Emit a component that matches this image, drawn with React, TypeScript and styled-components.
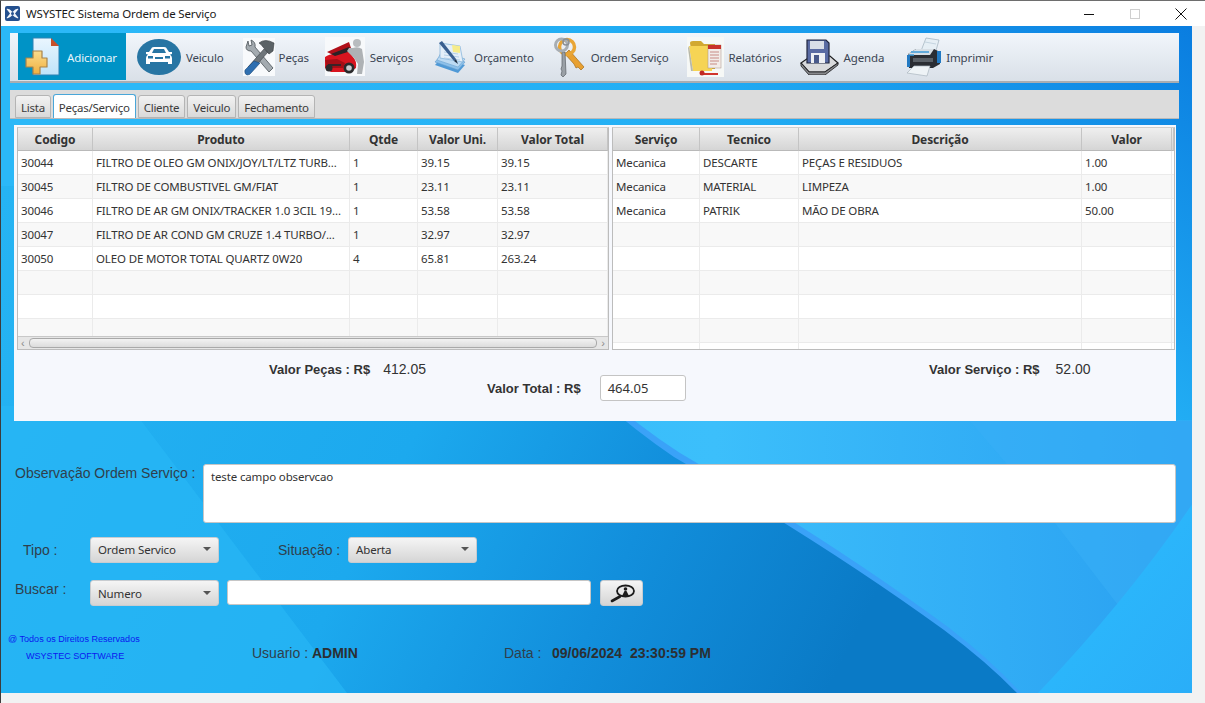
import React from "react";
import styled, { createGlobalStyle, css } from "styled-components";

const UI_FONT = `"Noto Sans", "Open Sans", sans-serif`;
const LABEL_FONT = `"Liberation Sans", Arial, sans-serif`;

const uiText = css`
  font: 11.5px ${UI_FONT};
  letter-spacing: -0.14px;
`;

const GlobalStyle = createGlobalStyle`
  html, body {
    margin: 0;
    padding: 0;
    overflow: hidden;
  }
  * {
    box-sizing: border-box;
  }
`;

/* ---------- icons ---------- */

const AppLogo = () => (
  <svg width="15" height="15" viewBox="0 0 15 15">
    <rect width="15" height="15" rx="2" fill="#24508f" />
    <path d="M1.500 3 Q4 2 7.500 6 Q11 2 13.500 3 L10 7.500 L13.500 12 Q11 13 7.500 9 Q4 13 1.500 12 L5 7.500 Z" fill="#f2f6fb" />
    <circle cx="7.500" cy="7.500" r="1.500" fill="#24508f" />
  </svg>
);

const AddIcon = () => (
  <svg width="36" height="42" viewBox="0 0 36 42">
    <defs>
      <linearGradient id="docFill" x1="0" y1="0" x2="0" y2="1">
        <stop offset="0" stopColor="#eaf6fe" />
        <stop offset="1" stopColor="#bfe3fa" />
      </linearGradient>
      <linearGradient id="plusFill" x1="0" y1="0" x2="0" y2="1">
        <stop offset="0" stopColor="#fbdc8c" />
        <stop offset="1" stopColor="#f0b040" />
      </linearGradient>
    </defs>
    <path d="M8 2 H26 L34 10 V39 H8 Z" fill="url(#docFill)" stroke="#2c82b5" strokeWidth="1" />
    <path d="M26 2 L34 10 H26 Z" fill="#c8502a" />
    <path
      d="M8 15 H17 V22 H22 V31 H15 V38 H8 V31 H1 V22 H8 Z"
      fill="url(#plusFill)"
      stroke="#a8834a"
      strokeWidth="1.2"
      strokeLinejoin="round"
    />
  </svg>
);

const CarBadgeIcon = () => (
  <svg width="44" height="36" viewBox="0 0 44 36">
    <ellipse cx="22" cy="18" rx="22" ry="18" fill="#2775a3" />
    <path
      d="M12 13 L15 8.500 Q15.500 8 17 8 H27 Q28.500 8 29 8.500 L32 13 L35 13 V15 L33 15.500 Q35 17 35 19 V25 H31 V23 H13 V25 H9 V19 Q9 17 11 15.500 L9 15 V13 Z"
      fill="#fff"
    />
    <path d="M15 14 L17 10 H27 L29 14 Z" fill="#2775a3" />
    <rect x="11" y="17" width="5" height="2.500" fill="#2775a3" />
    <rect x="28" y="17" width="5" height="2.500" fill="#2775a3" />
    <rect x="18" y="18" width="8" height="2" fill="#2775a3" />
  </svg>
);

const ToolsIcon = () => (
  <svg width="32" height="38" viewBox="0 0 32 38">
    <rect width="32" height="38" fill="#f8fafc" />
    <path d="M5 3 L3 9 Q3 13 8 13 L26 34 L30 30 L12 9 Q13 4 8 2 L9 7 L6 8 Z" fill="#a4abb0" stroke="#4b5358" strokeWidth="0.8" />
    <path d="M21 11 L5 29 L9 32 L25 14 Z" fill="#6f767b" stroke="#3c4246" strokeWidth="0.6" />
    <path d="M11 23 L2 32 Q1 36 4 37 Q7 37 8 35 L17 25 Z" fill="#2f6fb0" stroke="#1d4a78" strokeWidth="0.6" />
    <path d="M16 5 Q22 0 31 5 L30 13 L26 16 L20 9 Q18 6 16 5 Z" fill="#5b6266" stroke="#33383b" strokeWidth="0.6" />
  </svg>
);

const ServiceIcon = () => (
  <svg width="40" height="39" viewBox="0 0 40 39">
    <rect width="40" height="39" fill="#f7f9fb" />
    <path d="M2 15 L24 5 L26 11 L8 18 Z" fill="#b01019" />
    <path d="M0 20 Q4 17 10 17 L24 14 L28 20 Q32 24 31 31 L25 35 H6 L0 31 Z" fill="#d8141f" />
    <path d="M6 17 L24 10 L26 14 L10 19 Z" fill="#2a2226" />
    <path d="M0 23 L12 22 L20 26 L18 31 H2 Z" fill="#a40e16" />
    <path d="M3 27 H16 V29 H3 Z" fill="#3a2226" />
    <circle cx="24" cy="31" r="5.500" fill="#2a2a2c" />
    <circle cx="24" cy="31" r="2.800" fill="#c9cdd0" />
    <circle cx="4" cy="31" r="3.500" fill="#2a2a2c" />
    <circle cx="32" cy="6" r="4" fill="#b8bcbf" />
    <path d="M28 11 Q33 9 37 12 L39 25 L37 37 H32 L33 27 L29 21 L22 14 L24 11 Z" fill="#aeb2b5" />
  </svg>
);

const BudgetIcon = () => (
  <svg width="32" height="34" viewBox="0 0 32 34">
    <path d="M1 25 L8 17 L31 25 L24 33 Z" fill="#4f99d6" />
    <path d="M1 22 L8 14 L31 22 L24 30 Z" fill="#8cc0ea" stroke="#5f9bcc" strokeWidth="0.6" />
    <path d="M3 20 L8 11 L31 19 L24 27 Z" fill="#bcdaf3" stroke="#6ea5d0" strokeWidth="0.6" />
    <path d="M6 18 L6 3 L26 6 L29 22 Z" fill="#e4eff9" stroke="#7eb0d8" strokeWidth="0.7" />
    <path d="M10 12 L24 14 M10 15 L25 17 M10 18 L26 20" stroke="#a8c8e4" strokeWidth="0.8" />
    <path d="M18 5 L26 6 L26 13 L19 12 Z" fill="#f6ec8a" />
    <path d="M5 3 L8 1 L22 19 L20 21 Z" fill="#3a5f8f" />
    <path d="M20 21 L22 19 L24 24 Z" fill="#1f2f44" />
  </svg>
);

const KeysIcon = () => (
  <svg width="32" height="42" viewBox="0 0 32 42">
    <path d="M15 14 L30 31 L27 34 L24 31 L22 32 L20 28 L11 18 Z" fill="#e8a030" stroke="#a56f1c" strokeWidth="0.7" />
    <circle cx="13" cy="11" r="7.500" fill="none" stroke="#e9a636" strokeWidth="3.500" />
    <path d="M8 16 L11 16 L12 38 L9 41 L7 39 L8 35 L7 33 L8 30 Z" fill="#9aa0a6" stroke="#5a6066" strokeWidth="0.7" />
    <circle cx="7.500" cy="9" r="6" fill="none" stroke="#a8aeb3" strokeWidth="3" />
    <circle cx="12" cy="6" r="3" fill="none" stroke="#8a9096" strokeWidth="1.500" />
  </svg>
);

const ReportIcon = () => (
  <svg width="37" height="40" viewBox="0 0 37 40">
    <rect width="37" height="40" fill="#f6f8f6" />
    <path d="M3 6 Q3 4 6 4 H14 L17 7 H28 V32 H7 Z" fill="#d2a830" />
    <path d="M2 9 H26 L25 34 H6 Z" fill="#f6d455" />
    <path d="M2 9 L6 34 L4 34 L1 11 Z" fill="#b8b8a8" />
    <rect x="21" y="8" width="13" height="23" fill="#f2ece8" stroke="#a89088" strokeWidth="0.5" />
    <rect x="21" y="8" width="13" height="4" fill="#c8322a" />
    <path d="M23 15 H32 M23 18 H32 M23 21 H32 M23 24 H32 M23 27 H30" stroke="#c88a84" strokeWidth="1" />
    <path d="M15 36 H31 V38 H15 Z" fill="#d0342c" />
    <circle cx="15" cy="36" r="2.500" fill="#c02a24" />
  </svg>
);

const FloppyIcon = () => (
  <svg width="39" height="36" viewBox="0 0 39 36">
    <path d="M1 24 L11 17 H30 L38 24 L25 33 H9 Z" fill="#d9dadc" stroke="#1d1d1f" strokeWidth="1.200" />
    <path d="M1 24 L9 33 H25 L38 24 V26 L25 36 H9 L1 27 Z" fill="#88898c" stroke="#1d1d1f" strokeWidth="0.8" />
    <path d="M7 1 H26 L29 4 V24 H7 Z" fill="#5a6ba3" stroke="#20263f" strokeWidth="1.200" />
    <rect x="10" y="2" width="14" height="8" fill="#d9dee8" />
    <rect x="11" y="14" width="14" height="10" fill="#eef0f4" />
    <rect x="14" y="16" width="5" height="8" fill="#49598a" />
  </svg>
);

const PrinterIcon = () => (
  <svg width="36" height="40" viewBox="0 0 36 40">
    <path d="M15 14 L20 1 L33 3 L29 17 Z" fill="#e6eff5" stroke="#9fb0bc" strokeWidth="0.7" />
    <path d="M19 5 L30 7" stroke="#c4d4e0" strokeWidth="1" />
    <path d="M2 17 L10 12 H28 L34 15 V27 L27 31 H3 Z" fill="#2a2d33" />
    <path d="M2 17 L10 12 H28 L24 18 H3 Z" fill="#d8dfe5" />
    <path d="M5 15 H23 M3 18 H8" stroke="#3d9ad8" strokeWidth="1.500" />
    <path d="M1 18 H4 V30 H1 Z M31 14 H35 V26 H31 Z" fill="#2279c2" />
    <rect x="7" y="21" width="20" height="4" fill="#5a6067" />
    <path d="M8 29 H24 L21 39 L1 36 Z" fill="#eef3f6" stroke="#aab6bf" strokeWidth="0.7" />
  </svg>
);

const SearchIcon = () => (
  <svg width="26" height="19" viewBox="0 0 26 19">
    <ellipse cx="16.500" cy="7" rx="8.500" ry="5.500" fill="#e8e8e8" stroke="#1b1b1b" strokeWidth="1.800" />
    <circle cx="16.500" cy="5" r="1.800" fill="#1b1b1b" />
    <path d="M13 12 L15.500 7 H17.500 L20 12 Z" fill="#1b1b1b" />
    <path d="M11 12.500 L3 17" stroke="#1b1b1b" strokeWidth="2.600" strokeLinecap="round" />
  </svg>
);

/* ---------- data ---------- */

const toolItems = [
  { label: "Adicionar", icon: <AddIcon />, gap: 0, textGap: 6, active: true },
  { label: "Veiculo", icon: <CarBadgeIcon />, gap: 11, textGap: 5 },
  { label: "Peças", icon: <ToolsIcon />, gap: 19, textGap: 4 },
  { label: "Serviços", icon: <ServiceIcon />, gap: 16, textGap: 5 },
  { label: "Orçamento", icon: <BudgetIcon />, gap: 21, textGap: 8 },
  { label: "Ordem Serviço", icon: <KeysIcon />, gap: 20, textGap: 5 },
  { label: "Relatórios", icon: <ReportIcon />, gap: 18, textGap: 5 },
  { label: "Agenda", icon: <FloppyIcon />, gap: 18, textGap: 5 },
  { label: "Imprimir", icon: <PrinterIcon />, gap: 22, textGap: 4 },
];

const tabs = ["Lista", "Peças/Serviço", "Cliente", "Veiculo", "Fechamento"];

const partColumns = "75px 257px 68px 80px 110px";
const partHeaders = ["Codigo", "Produto", "Qtde", "Valor Uni.", "Valor Total"];
const partRows = [
  ["30044", "FILTRO DE OLEO GM ONIX/JOY/LT/LTZ TURB...", "1", "39.15", "39.15"],
  ["30045", "FILTRO DE COMBUSTIVEL GM/FIAT", "1", "23.11", "23.11"],
  ["30046", "FILTRO DE AR GM ONIX/TRACKER 1.0 3CIL 19...", "1", "53.58", "53.58"],
  ["30047", "FILTRO DE AR COND GM CRUZE 1.4 TURBO/...", "1", "32.97", "32.97"],
  ["30050", "OLEO DE MOTOR TOTAL QUARTZ 0W20", "4", "65.81", "263.24"],
  ["", "", "", "", ""],
  ["", "", "", "", ""],
  ["", "", "", "", ""],
];

const serviceColumns = "87px 99px 283px 90px 2px";
const serviceHeaders = ["Serviço", "Tecnico", "Descrição", "Valor", ""];
const serviceRows = [
  ["Mecanica", "DESCARTE", "PEÇAS E RESIDUOS", "1.00", ""],
  ["Mecanica", "MATERIAL", "LIMPEZA", "1.00", ""],
  ["Mecanica", "PATRIK", "MÃO DE OBRA", "50.00", ""],
  ["", "", "", "", ""],
  ["", "", "", "", ""],
  ["", "", "", "", ""],
  ["", "", "", "", ""],
  ["", "", "", "", ""],
  ["", "", "", "", ""],
];

/* ---------- window ---------- */

const Screen = styled.div`
  position: relative;
  width: 1205px;
  height: 703px;
  display: flex;
  flex-direction: column;
  background: #f2f2f2;
  border-top: 1px solid #6e6e6e;
  border-left: 1px solid #3c3c3c;
  overflow: hidden;
`;

const TitleBar = styled.div`
  height: 25px;
  flex: none;
  display: flex;
  align-items: center;
  background: #fff;
  padding-left: 4px;
  ${uiText};
  color: #1a1a1a;
`;

const TitleText = styled.span`
  margin-left: 6px;
  flex: 1;
`;

const WindowButton = styled.span`
  width: 46px;
  height: 25px;
  display: flex;
  align-items: center;
  justify-content: center;
`;

const WindowControls = styled.div`
  display: flex;
  padding-right: 1px;
`;

const Main = styled.div`
  position: relative;
  width: 1191px;
  height: 667px;
  flex: none;
  overflow: hidden;
  display: flex;
  flex-direction: column;
  padding: 7px 13px 0 9px;
`;

const Backdrop = styled.svg`
  position: absolute;
  left: 0;
  top: 0;
`;

const Layer = styled.div`
  position: relative;
  display: flex;
  flex-direction: column;
`;

const Toolbar = styled.div`
  height: 50px;
  display: flex;
  align-items: flex-start;
  padding-left: 8px;
  background: linear-gradient(#f1f6fb, #d9e0e8);
  border-bottom: 2px solid #a9adb2;
`;

const ToolItem = styled.div<{ $active?: boolean; $gap: number; $textGap: number }>`
  height: 47px;
  display: flex;
  align-items: center;
  gap: ${(p) => p.$textGap}px;
  margin-left: ${(p) => p.$gap}px;
  padding: ${(p) => (p.$active ? "0 9px 0 7px" : "0")};
  background: ${(p) => (p.$active ? "#0093c6" : "transparent")};
  color: ${(p) => (p.$active ? "#e8f5fb" : "#3b4654")};
  ${uiText};
  white-space: nowrap;
`;

const ToolLabel = styled.span`
  padding-top: 2px;
`;

const TabBar = styled.div`
  height: 29px;
  margin-top: 7px;
  display: flex;
  align-items: flex-end;
  gap: 2px;
  padding-left: 5px;
  background: #dcdcdc;
  border-bottom: 1px solid #b9b9b9;
`;

const Tab = styled.div<{ $active?: boolean }>`
  height: ${(p) => (p.$active ? "24px" : "23px")};
  padding: 1px 5px 0;
  display: flex;
  align-items: center;
  ${uiText};
  letter-spacing: -0.25px;
  color: #3a3a3a;
  border: 1px solid ${(p) => (p.$active ? "#4aa6d8" : "#b4b4b4")};
  border-bottom: ${(p) => (p.$active ? "none" : "1px solid #b4b4b4")};
  border-radius: 3px 3px 0 0;
  background: ${(p) => (p.$active ? "#fff" : "linear-gradient(#f2f2f2, #d9d9d9)")};
`;

const Panel = styled.div`
  width: 1162px;
  height: 296px;
  margin: 6px 0 0 4px;
  padding: 2px 1px 0 3px;
  background: #f6f8fd;
`;

const Tables = styled.div`
  display: flex;
  gap: 3px;
`;

const TableBox = styled.div<{ $width: number }>`
  width: ${(p) => p.$width}px;
  height: 223px;
  flex: none;
  display: flex;
  flex-direction: column;
  border: 1px solid #bcbcbc;
  border-top-color: #cfcfcf;
  background: #fff;
  overflow: hidden;
`;

const TableRow = styled.div<{ $cols: string }>`
  display: grid;
  grid-template-columns: ${(p) => p.$cols};
  flex: none;
`;

const HeadCell = styled.div`
  height: 23px;
  display: flex;
  align-items: center;
  justify-content: center;
  background: linear-gradient(#efefef, #d5d5d5);
  border-right: 1px solid #c4c4c4;
  border-bottom: 1px solid #b9b9b9;
  font: 700 12px ${UI_FONT};
  letter-spacing: -0.1px;
  color: #333;
`;

const Cell = styled.div<{ $odd: boolean }>`
  height: 24px;
  padding: 0 3px;
  display: flex;
  align-items: center;
  background: ${(p) => (p.$odd ? "#f8f8f8" : "#fff")};
  border-right: 1px solid #ebebeb;
  border-bottom: 1px solid #ebebeb;
  ${uiText};
  color: #333;
  white-space: nowrap;
  overflow: hidden;
`;

const TableBody = styled.div`
  flex: 1;
  min-height: 0;
  overflow: hidden;
`;

const ScrollBar = styled.div`
  height: 13px;
  flex: none;
  display: flex;
  align-items: center;
  padding: 0 3px;
  gap: 4px;
  background: #e6e6e6;
  border-top: 1px solid #c8c8c8;
  color: #8a8a8a;
  font: 11px ${LABEL_FONT};
`;

const ScrollThumb = styled.div`
  flex: 1;
  height: 10px;
  border: 1px solid #a9a9a9;
  border-radius: 4px;
  background: linear-gradient(#f2f2f2, #dcdcdc);
`;

const Totals = styled.div`
  display: flex;
  padding-top: 9px;
  height: 20px;
  box-sizing: content-box;
  align-items: center;
`;

const TotalGroup = styled.div<{ $left: number; $gap: number }>`
  display: flex;
  gap: ${(p) => p.$gap}px;
  align-items: center;
  margin-left: ${(p) => p.$left}px;
`;

const TotalLabel = styled.span`
  font: 700 13px ${LABEL_FONT};
  color: #333;
`;

const TotalValue = styled.span`
  font: 14px ${LABEL_FONT};
  color: #333;
`;

const GrandTotal = styled.div`
  display: flex;
  align-items: center;
  margin: -4px 0 0 470px;
  gap: 19px;
`;

const TotalBox = styled.div`
  width: 86px;
  height: 26px;
  padding-left: 7px;
  display: flex;
  align-items: center;
  background: #fff;
  border: 1px solid #c4c4c4;
  border-radius: 3px;
  font: 13px ${UI_FONT};
  color: #333;
`;

/* ---------- form under the panel ---------- */

const Form = styled.div`
  display: flex;
  flex-direction: column;
  margin: 43px 0 0 -9px;
`;

const FormRow = styled.div<{ $top: number }>`
  display: flex;
  align-items: flex-start;
  margin-top: ${(p) => p.$top}px;
`;

const FieldLabel = styled.span<{ $left?: number; $width?: number; $drop?: number }>`
  flex: none;
  display: block;
  width: ${(p) => (p.$width ? `${p.$width}px` : "auto")};
  margin-left: ${(p) => p.$left ?? 0}px;
  padding-top: ${(p) => p.$drop ?? 0}px;
  font: 14px ${LABEL_FONT};
  color: #2f3f4c;
  white-space: nowrap;
`;

const NoteBox = styled.div`
  width: 973px;
  height: 59px;
  margin-left: 8px;
  padding: 4px 7px;
  background: #fff;
  border: 1px solid #c6c6c6;
  border-radius: 3px;
  ${uiText};
  color: #333;
`;

const Select = styled.div<{ $width: number; $low?: boolean }>`
  width: ${(p) => p.$width}px;
  height: 26px;
  flex: none;
  padding: ${(p) => (p.$low ? "0 7px 0 7px" : "0 7px 2px 7px")};
  display: flex;
  align-items: center;
  justify-content: space-between;
  background: linear-gradient(#f5f5f5, #d5d5d5);
  border: 1px solid #c8ccd0;
  border-radius: 3px;
  ${uiText};
  color: #333;
`;

const Caret = styled.span`
  width: 0;
  height: 0;
  border-left: 4px solid transparent;
  border-right: 4px solid transparent;
  border-top: 4px solid #555;
`;

const SearchField = styled.div`
  width: 364px;
  height: 25px;
  margin-left: 8px;
  background: #fff;
  border: 1px solid #c6c6c6;
  border-radius: 3px;
`;

const SearchButton = styled.div`
  width: 43px;
  height: 26px;
  margin-left: 9px;
  display: flex;
  align-items: center;
  justify-content: center;
  background: linear-gradient(#f5f5f5, #d5d5d5);
  border: 1px solid #c8ccd0;
  border-radius: 3px;
`;

const Footer = styled.div`
  position: relative;
  display: flex;
  align-items: flex-start;
  margin-top: 25px;
`;

const Copyright = styled.div`
  width: 244px;
  flex: none;
  margin-left: 7px;
  font: 9.05px/17px ${LABEL_FONT};
  color: #0b18f0;
  white-space: nowrap;
`;

const CopyrightName = styled.div`
  padding-left: 18px;
`;

const FooterField = styled.div<{ $width?: number }>`
  width: ${(p) => (p.$width ? `${p.$width}px` : "auto")};
  flex: none;
  padding-top: 14px;
  font: 14px ${LABEL_FONT};
  color: #2f3f4c;
  white-space: pre;
`;

const Strong = styled.b`
  color: #2b2f33;
`;

const DateValue = styled(Strong)`
  margin-left: -1px;
`;

const ColumnHeads = ({ cols, heads }: { cols: string; heads: string[] }) => (
  <TableRow $cols={cols}>
    {heads.map((h, i) => (
      <HeadCell key={i}>{h}</HeadCell>
    ))}
  </TableRow>
);

const Rows = ({ cols, rows }: { cols: string; rows: string[][] }) => (
  <TableBody>
    {rows.map((row, r) => (
      <TableRow $cols={cols} key={r}>
        {row.map((c, i) => (
          <Cell $odd={r % 2 === 1} key={i}>
            {c}
          </Cell>
        ))}
      </TableRow>
    ))}
  </TableBody>
);

const App = () => {
  return (
    <>
      <GlobalStyle />
      <Screen>
        <TitleBar>
          <AppLogo />
          <TitleText>WSYSTEC Sistema Ordem de Serviço</TitleText>
          <WindowControls>
            <WindowButton>
              <svg width="10" height="10" viewBox="0 0 10 10">
                <path d="M0 5.500 H10" stroke="#111" strokeWidth="1" />
              </svg>
            </WindowButton>
            <WindowButton>
              <svg width="10" height="10" viewBox="0 0 10 10">
                <rect x="0.500" y="0.500" width="9" height="9" fill="none" stroke="#cfcfcf" />
              </svg>
            </WindowButton>
            <WindowButton>
              <svg width="12" height="12" viewBox="0 0 12 12">
                <path d="M0.500 0.500 L11.500 11.500 M11.500 0.500 L0.500 11.500" stroke="#111" strokeWidth="1" />
              </svg>
            </WindowButton>
          </WindowControls>
        </TitleBar>

        <Main>
          <Backdrop width="1191" height="667" viewBox="0 0 1191 667">
            <defs>
              <linearGradient id="bgBase" x1="1" y1="0" x2="0.45" y2="0.45">
                <stop offset="0" stopColor="#0a7de0" />
                <stop offset="0.55" stopColor="#22aef4" />
                <stop offset="1" stopColor="#2bb8f8" />
              </linearGradient>
              <linearGradient id="bgLight" x1="0" y1="0" x2="1" y2="0">
                <stop offset="0" stopColor="#2cb8f8" />
                <stop offset="0.6" stopColor="#3cbffb" />
                <stop offset="1" stopColor="#2aa0f1" />
              </linearGradient>
              <linearGradient id="bgDark" x1="0" y1="0" x2="1" y2="0.25">
                <stop offset="0" stopColor="#26b4f3" />
                <stop offset="0.5" stopColor="#1ca9ee" />
                <stop offset="0.75" stopColor="#128fdc" />
                <stop offset="1" stopColor="#0a7ac6" />
              </linearGradient>
              <linearGradient id="bgCorner" x1="0" y1="0" x2="1" y2="1">
                <stop offset="0" stopColor="#2cbdfe" />
                <stop offset="1" stopColor="#2aaef8" />
              </linearGradient>
            </defs>
            <rect width="1191" height="667" fill="url(#bgBase)" />
            <rect y="395" width="1191" height="272" fill="url(#bgLight)" />
            <path d="M968 394 L1005 437 L1054 497 L1117 579 L1181 666 H1191 V394 Z" fill="#38aef6" opacity="0.55" />
            <path d="M0 160 H400 Q560 350 679 427 Q830 515 947 601 Q990 634 1020 667 H0 Z" fill="#3aa2f8" />
            <path d="M0 160 H400 Q555 352 673 431 Q826 519 943 604 Q986 636 1016 667 H0 Z" fill="url(#bgDark)" />
            <path d="M1192 477 Q1125 575 1037 667 H1191 V477 Z" fill="url(#bgCorner)" />
            <path d="M0 380 H129 L346 667 H0 Z" fill="#28b6f5" opacity="0.7" />
          </Backdrop>

          <Layer>
            <Toolbar>
              {toolItems.map((t) => (
                <ToolItem key={t.label} $active={t.active} $gap={t.gap} $textGap={t.textGap}>
                  {t.icon}
                  <ToolLabel>{t.label}</ToolLabel>
                </ToolItem>
              ))}
            </Toolbar>

            <TabBar>
              {tabs.map((t, i) => (
                <Tab key={t} $active={i === 1}>
                  {t}
                </Tab>
              ))}
            </TabBar>

            <Panel>
              <Tables>
                <TableBox $width={592}>
                  <ColumnHeads cols={partColumns} heads={partHeaders} />
                  <Rows cols={partColumns} rows={partRows} />
                  <ScrollBar>
                    <span>‹</span>
                    <ScrollThumb />
                    <span>›</span>
                  </ScrollBar>
                </TableBox>
                <TableBox $width={563}>
                  <ColumnHeads cols={serviceColumns} heads={serviceHeaders} />
                  <Rows cols={serviceColumns} rows={serviceRows} />
                </TableBox>
              </Tables>

              <Totals>
                <TotalGroup $left={252} $gap={13}>
                  <TotalLabel>Valor Peças : R$</TotalLabel>
                  <TotalValue>412.05</TotalValue>
                </TotalGroup>
                <TotalGroup $left={503} $gap={16}>
                  <TotalLabel>Valor Serviço : R$</TotalLabel>
                  <TotalValue>52.00</TotalValue>
                </TotalGroup>
              </Totals>
              <GrandTotal>
                <TotalLabel>Valor Total : R$</TotalLabel>
                <TotalBox>464.05</TotalBox>
              </GrandTotal>
            </Panel>

            <Form>
              <FormRow $top={0}>
                <FieldLabel $left={14} $width={180} $drop={1}>
                  Observação Ordem Serviço :
                </FieldLabel>
                <NoteBox>teste campo observcao</NoteBox>
              </FormRow>

              <FormRow $top={14}>
                <FieldLabel $left={22} $width={67} $drop={5}>
                  Tipo :
                </FieldLabel>
                <Select $width={129}>
                  Ordem Servico
                  <Caret />
                </Select>
                <FieldLabel $left={59} $width={70} $drop={5}>
                  Situação :
                </FieldLabel>
                <Select $width={129}>
                  Aberta
                  <Caret />
                </Select>
              </FormRow>

              <FormRow $top={17}>
                <FieldLabel $left={14} $width={75} $drop={1}>
                  Buscar :
                </FieldLabel>
                <Select $width={129} $low>
                  Numero
                  <Caret />
                </Select>
                <SearchField />
                <SearchButton>
                  <SearchIcon />
                </SearchButton>
              </FormRow>

              <Footer>
                <Copyright>
                  <div>@ Todos os Direitos Reservados</div>
                  <CopyrightName>WSYSTEC SOFTWARE</CopyrightName>
                </Copyright>
                <FooterField $width={252}>
                  Usuario : <Strong>ADMIN</Strong>
                </FooterField>
                <FooterField>
                  Data :   <DateValue>09/06/2024  23:30:59 PM</DateValue>
                </FooterField>
              </Footer>
            </Form>
          </Layer>
        </Main>
      </Screen>
    </>
  );
};

export default App;
